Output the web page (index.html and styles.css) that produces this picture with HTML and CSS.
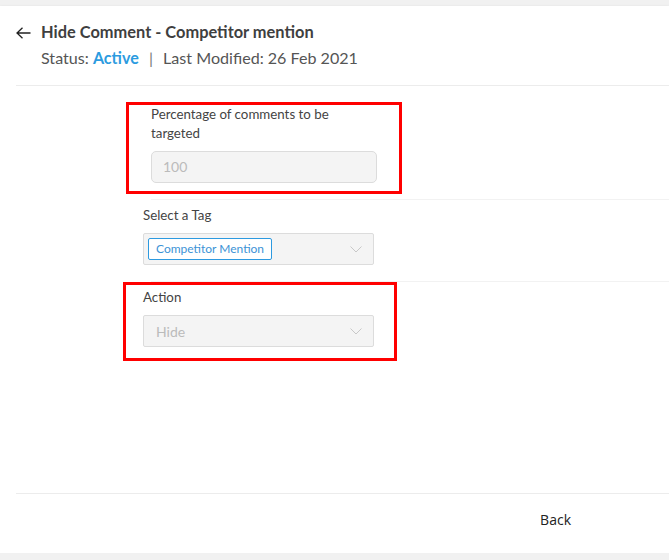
FILE: index.html
```html
<!DOCTYPE html>
<html>
<head>
    <title>Hide Comment - Competitor mention</title>
    <link rel="stylesheet" href="styles.css">
</head>
<body>
<div class="card">
    <!-- Header -->
    <div class="header">
        <div class="title-row">
            <span class="back-arrow">
                <svg width="15" height="12" viewBox="0 0 15 12"><path d="M14.5 6H1M6.5 0.8L1 6l5.5 5.2" fill="none" stroke="#222" stroke-width="1.3"/></svg>
            </span>
            <h1 class="title">Hide Comment - Competitor mention</h1>
        </div>
        <div class="status">
            Status: <span class="status-active">Active</span>
            <span class="sep">|</span>
            Last Modified: 26 Feb 2021
        </div>
    </div>

    <!-- Form -->
    <div class="form">
        <div class="form-row">
            <div class="highlight highlight-first"></div>
            <label class="field-label narrow">Percentage of comments to be targeted</label>
            <div class="input disabled">100</div>
        </div>
        <div class="form-row">
            <label class="field-label shift">Select a Tag</label>
            <div class="select shift">
                <span class="tag">Competitor Mention</span>
                <span class="chevron"><svg width="12" height="7" viewBox="0 0 12 7"><path d="M0.5 0.5L6 6l5.5-5.5" fill="none" stroke="#c8c8c8" stroke-width="1"/></svg></span>
            </div>
        </div>
        <div class="form-row last">
            <div class="highlight highlight-second"></div>
            <label class="field-label shift">Action</label>
            <div class="select shift">
                <span class="placeholder">Hide</span>
                <span class="chevron"><svg width="12" height="7" viewBox="0 0 12 7"><path d="M0.5 0.5L6 6l5.5-5.5" fill="none" stroke="#c8c8c8" stroke-width="1"/></svg></span>
            </div>
        </div>
    </div>

    <!-- Footer -->
    <div class="footer">
        <button class="back-btn">Back</button>
    </div>
</div>
</body>
</html>
```

FILE: styles.css
```css
body {
    margin: 0;
    background-color: #f1f1f1;
    font-family: Lato, "Open Sans", sans-serif;
    color: #444;
}
.card {
    margin-top: 6px;
    height: 547px;
    background-color: #fff;
    box-shadow: 0 1px 3px rgba(0, 0, 0, 0.12);
    display: flex;
    flex-direction: column;
}
.header {
    margin-left: 16px;
    padding: 16px 0 17px;
    border-bottom: 1px solid #ececec;
}
.title-row {
    display: flex;
    align-items: center;
    height: 20px;
}
.back-arrow {
    display: flex;
    width: 25px;
    padding-top: 2px;
}
.title {
    margin: 0;
    font-size: 16.4px;
    font-weight: bold;
    line-height: 20px;
    color: #3f3f3f;
}
.status {
    margin-top: 6px;
    margin-left: 25px;
    font-size: 16.1px;
    line-height: 20px;
    color: #555;
}
.status-active {
    color: #2b9be0;
    font-weight: bold;
}
.sep {
    color: #777;
    margin: 0 6px;
}
.form {
    margin-top: 13px;
    margin-left: 151px;
}
.form-row {
    position: relative;
    padding: 6px 0 16px;
    border-bottom: 1px solid #f2f2f2;
}
.form-row.last {
    border-bottom: none;
}
.field-label {
    display: block;
    font-size: 13.3px;
    line-height: 19px;
    color: #444;
    margin-bottom: 8px;
}
.narrow {
    width: 195px;
}
.shift {
    margin-left: -8px;
}
.input {
    box-sizing: border-box;
    width: 226px;
    height: 32px;
    border: 1px solid #dcdcdc;
    border-radius: 5px;
    background-color: #f4f4f4;
    padding: 0 11px;
    font-size: 14px;
    line-height: 30px;
    color: #bbb;
}
.select {
    box-sizing: border-box;
    width: 231px;
    height: 32px;
    border: 1px solid #dcdcdc;
    border-radius: 2px;
    background-color: #f4f4f4;
    display: flex;
    align-items: center;
    padding: 0 11px 0 4px;
}
.tag {
    box-sizing: border-box;
    height: 22px;
    padding: 0 7px;
    border: 1px solid #2d9ae0;
    border-radius: 2px;
    background-color: #fff;
    font-size: 12px;
    line-height: 20px;
    color: #3c93d6;
}
.placeholder {
    padding-left: 8px;
    font-size: 14px;
    color: #bbb;
}
.chevron {
    display: flex;
    margin-left: auto;
}
.highlight {
    position: absolute;
    border: 3px solid #ff0000;
    box-sizing: border-box;
    pointer-events: none;
}
.highlight-first {
    left: -25px;
    top: 3px;
    width: 276px;
    height: 92px;
}
.highlight-second {
    left: -28px;
    top: 0;
    width: 274px;
    height: 79px;
}
.footer {
    margin-top: auto;
    margin-left: 16px;
    height: 60px;
    border-top: 1px solid #ececec;
    display: flex;
    align-items: center;
    justify-content: flex-end;
    padding-right: 98px;
    padding-bottom: 9px;
    box-sizing: border-box;
}
.back-btn {
    border: none;
    background: none;
    font-family: "Open Sans", sans-serif;
    font-size: 14px;
    color: #222;
    padding: 0;
    cursor: pointer;
}
```
